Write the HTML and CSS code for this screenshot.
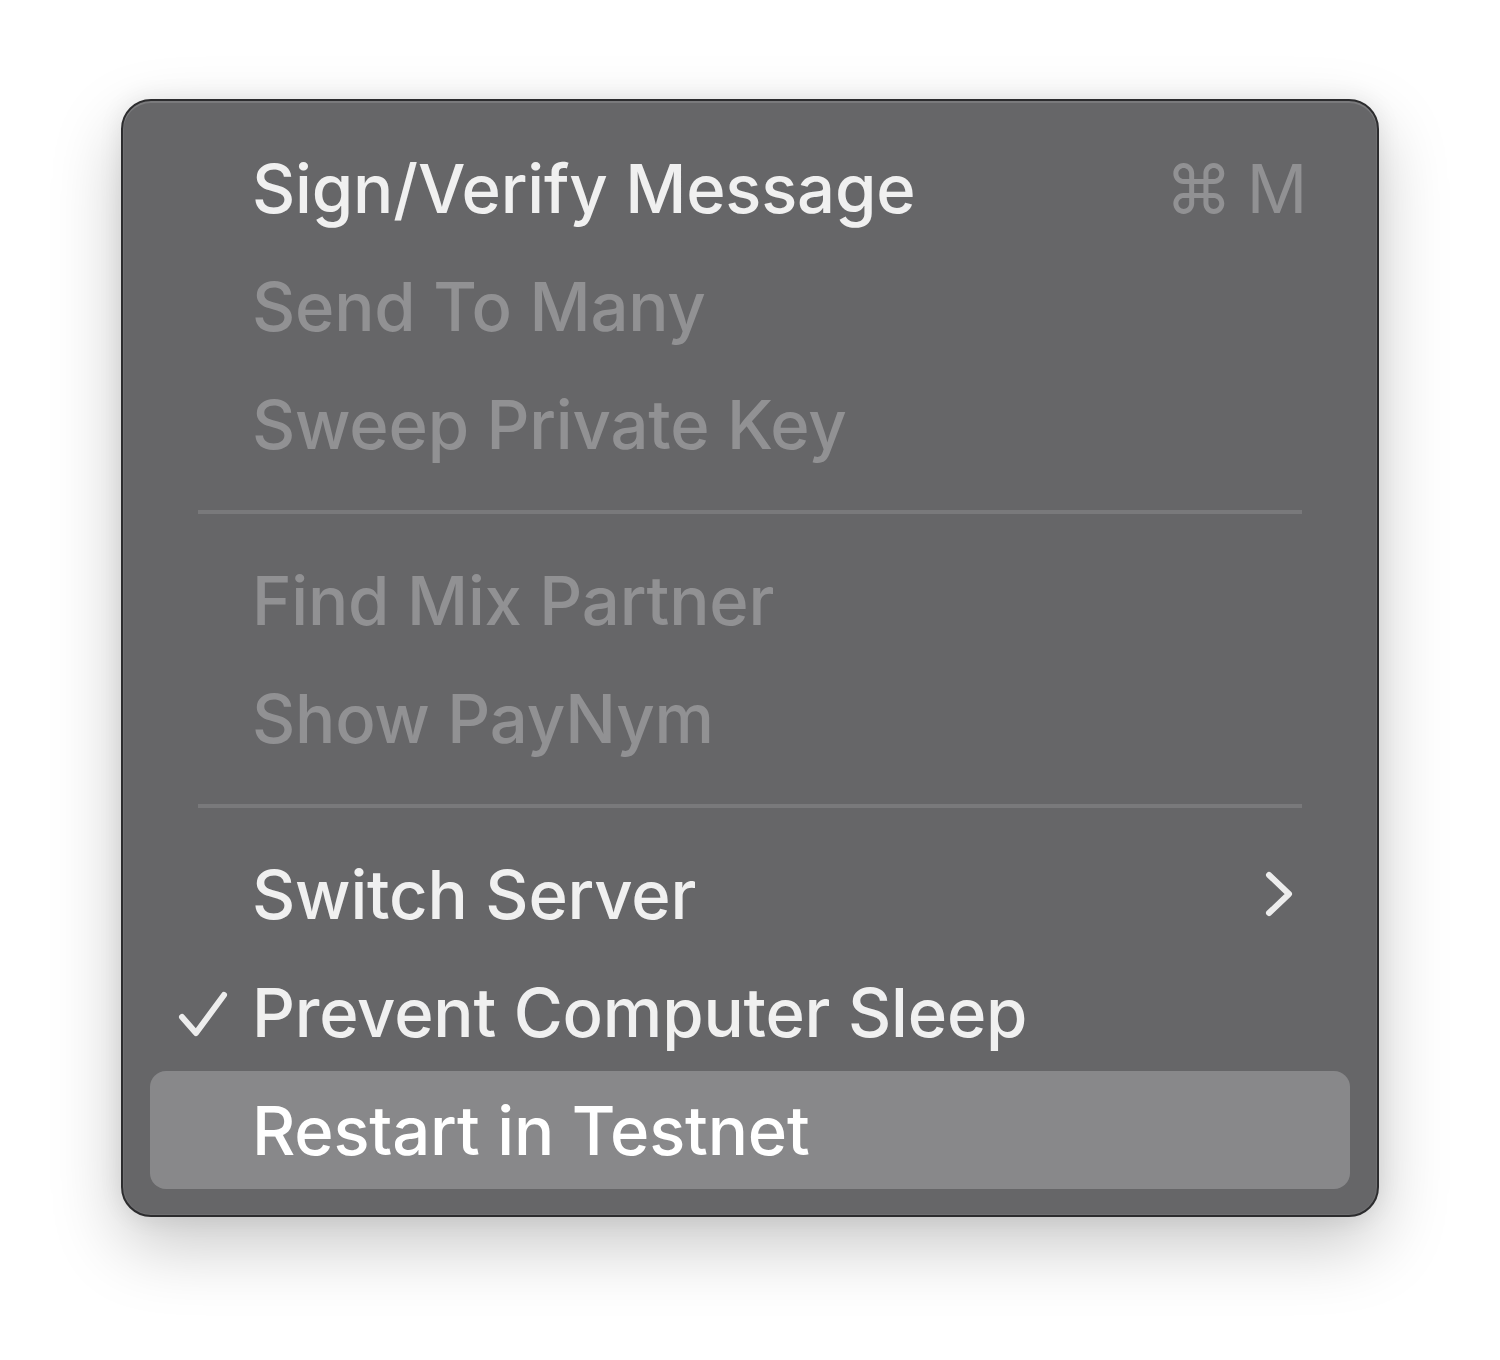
FILE: index.html
```html
<!DOCTYPE html>
<html lang="en">
<head>
    <meta charset="UTF-8">
    <meta name="viewport" content="width=device-width, initial-scale=1.0">
    <title>Tools Menu</title>
    <link rel="stylesheet" href="styles.css">
</head>
<body>
    <div class="menu">
        <div class="item">
            <span class="label">Sign/Verify Message</span>
            <span class="shortcut">&#8984; M</span>
        </div>
        <div class="item disabled">
            <span class="label">Send To Many</span>
        </div>
        <div class="item disabled">
            <span class="label">Sweep Private Key</span>
        </div>
        <div class="separator"></div>
        <div class="item disabled">
            <span class="label">Find Mix Partner</span>
        </div>
        <div class="item disabled">
            <span class="label">Show PayNym</span>
        </div>
        <div class="separator"></div>
        <div class="item">
            <span class="label">Switch Server</span>
            <svg class="chevron" width="30" height="50" viewBox="0 0 30 50">
                <path d="M5 6 L25 25 L5 44" fill="none" stroke="#ededed" stroke-width="6" stroke-linecap="round" stroke-linejoin="round"/>
            </svg>
        </div>
        <div class="item">
            <svg class="check" width="52" height="48" viewBox="0 0 52 48">
                <path d="M4 26 L18 42 L46 4" fill="none" stroke="#ededed" stroke-width="6" stroke-linecap="round" stroke-linejoin="round"/>
            </svg>
            <span class="label">Prevent Computer Sleep</span>
        </div>
        <div class="item active">
            <span class="label">Restart in Testnet</span>
        </div>
    </div>
</body>
</html>
```

FILE: styles.css
```css
html, body {
    background-color: #ffffff;
}
body {
    margin: 0;
    min-height: 1360px;
    box-sizing: border-box;
    padding: 99px 0 0 121px;
    font-family: Inter, "Noto Sans", sans-serif;
}
.menu {
    width: 1258px;
    height: 1118px;
    box-sizing: border-box;
    padding: 28px 27px 27px;
    background-color: #666668;
    border: 2px solid #2c2c2e;
    border-radius: 30px;
    box-shadow: inset 0 2px 0 #7a7a7c, inset 0 0 0 1px #6f6f71,
                0 28px 70px rgba(0,0,0,0.22), 0 0 24px rgba(0,0,0,0.08);
}
.item {
    position: relative;
    display: flex;
    align-items: center;
    height: 118px;
    padding: 0 43px 0 102px;
    border-radius: 16px;
    color: #f0f0f0;
    font-size: 67px;
    font-weight: 500;
    letter-spacing: -0.2px;
}
.item.disabled {
    color: #919193;
}
.item.active {
    background-color: #88888a;
    color: #ffffff;
}
.label {
    flex: 1;
    white-space: nowrap;
}
.shortcut {
    color: #919193;
    font-weight: 400;
    word-spacing: -4px;
}
.chevron {
    margin-right: 13px;
}
.check {
    position: absolute;
    left: 28px;
    top: 38px;
}
.separator {
    height: 4px;
    margin: 27px 48px;
    background-color: #79797b;
}
```
